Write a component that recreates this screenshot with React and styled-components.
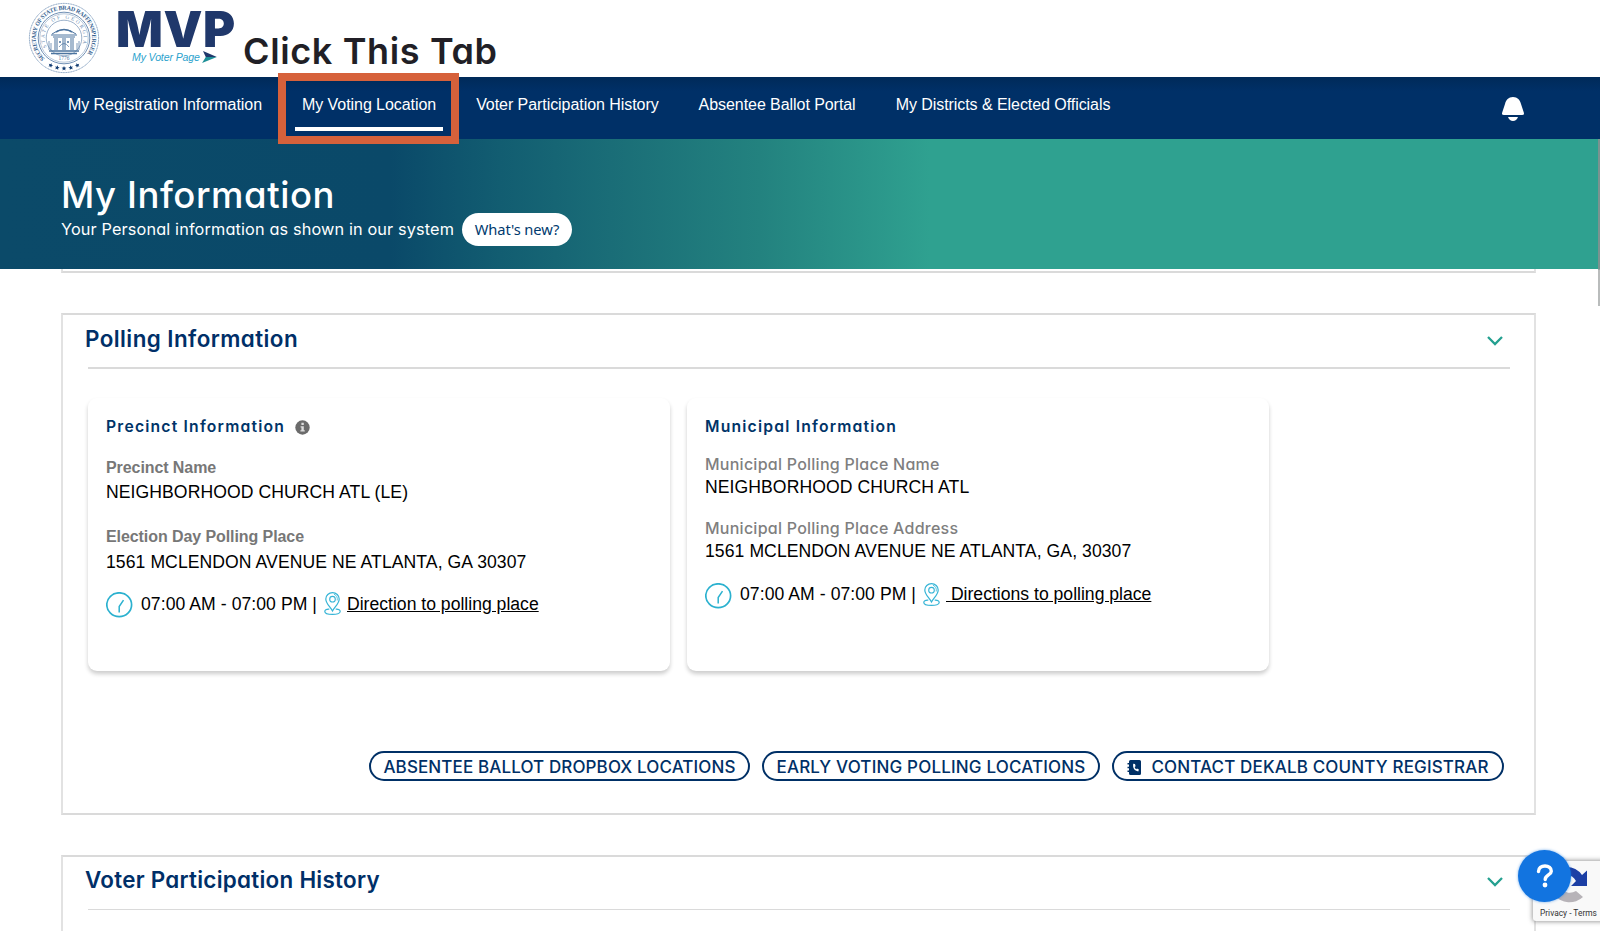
import React from "react";
import styled, { createGlobalStyle, css } from "styled-components";

const plain = `"Liberation Sans", Arial, sans-serif`;
const navy = "#003066";
const line = "#dadada";

/* Inter with the single-storey "a" */
const geometric = (font) => css`
  font: ${font} Inter, "Open Sans", sans-serif;
  font-feature-settings: "cv11";
`;

const GlobalStyle = createGlobalStyle`
  * { box-sizing: border-box; }
  html, body { margin: 0; height: 931px; overflow: hidden; background: #fff; }
  body { font-family: ${plain}; color: #000; }
  #root { height: 931px; overflow: hidden; }
`;

const Page = styled.div`
  position: relative;
  width: 1600px;
  height: 931px;
  overflow: hidden;
  background: #fff;
  white-space: nowrap;
`;

/* ---------- header ---------- */
const Header = styled.header`
  display: flex;
  align-items: flex-start;
  height: 77px;
  padding-left: 28px;
`;
const SealIcon = styled.svg`
  width: 72px;
  height: 72px;
  margin-top: 2px;
  flex: none;
`;
const Brand = styled.div`
  display: flex;
  flex-direction: column;
  width: 127px;
  padding: 12px 0 0 16px;
`;
const BrandName = styled.div`
  ${geometric("900 49px/36px")}
  letter-spacing: 0.6px;
  color: #20386b;
`;
const BrandTag = styled.div`
  display: flex;
  gap: 1px;
  align-items: flex-start;
  margin-top: 3px;
  padding-left: 16px;
  font: italic 10.5px/12px ${plain};
  letter-spacing: -0.1px;
  color: #2ba2cd;
`;
const TagArrow = styled.svg`
  width: 16px;
  height: 12px;
  flex: none;
`;
const Caption = styled.div`
  margin-top: 31px;
  padding-left: 16px;
  ${geometric("600 36px/40px")}
  letter-spacing: 0.63px;
  color: #211f26;
`;

/* ---------- navigation ---------- */
const Nav = styled.nav`
  display: flex;
  align-items: flex-start;
  gap: 26px;
  height: 62px;
  padding-left: 61px;
  background: linear-gradient(#002a59 0, #003067 14px);
`;
const NavItem = styled.a`
  position: relative;
  height: 54px;
  padding: 18px 7px 0;
  font: 16px/20px ${plain};
  letter-spacing: -0.06px;
  color: #fff;
  border-bottom: 4px solid ${(p) => (p.$active ? "#fff" : "transparent")};
`;
const Highlight = styled.span`
  position: absolute;
  z-index: 2;
  left: -17px;
  right: -16px;
  top: -4px;
  height: 71px;
  border: 8px solid #d6613b;
`;
const BellButton = styled.svg`
  width: 24px;
  height: 25px;
  margin: 19px 75px 0 auto;
  fill: #fff;
`;

/* ---------- banner ---------- */
const Banner = styled.section`
  height: 130px;
  padding: 38px 0 0 61px;
  color: #fff;
  background: linear-gradient(90deg, #0b4a69 0, #0a4969 390px, #125d71 500px, #1a6d77 610px, #23827f 760px, #2fa190 930px);
`;
const Title = styled.h1`
  margin: 0;
  ${geometric("500 36.5px/36px")}
  letter-spacing: 0.55px;
`;
const SubtitleRow = styled.div`
  display: flex;
  align-items: center;
  height: 33px;
`;
const Subtitle = styled.span`
  width: 401px;
  margin-top: -2px;
  ${geometric("400 16.3px/24px")}
  letter-spacing: 0.13px;
`;
const Pill = styled.button`
  width: 110px;
  height: 33px;
  padding: 0 0 2px;
  border: 0;
  border-radius: 17px;
  background: #fff;
  color: #003a6e;
  font: 14.7px/30px "Noto Sans", sans-serif;
  letter-spacing: -0.1px;
`;

/* ---------- cards ---------- */
const Main = styled.main`
  display: flex;
  flex-direction: column;
  gap: 40px;
  width: 1475px;
  margin-left: 61px;
`;
const Card = styled.section`
  height: ${(p) => p.$height}px;
  flex: none;
  border: 2px solid ${line};
  border-top-width: ${(p) => (p.$cut ? 0 : 2)}px;
  border-left-color: #e2e2e2;
  border-right-color: #e2e2e2;
`;
const CardHead = styled.div`
  display: flex;
  justify-content: space-between;
  height: ${(p) => p.$height}px;
  margin: 0 24px 0 25px;
  padding-top: ${(p) => p.$height - 46}px;
  border-bottom: ${(p) => p.$height - 52}px solid ${line};
`;
const CardTitle = styled.h2`
  margin: 0 0 0 -3px;
  ${geometric("600 22.4px/32px")}
  letter-spacing: ${(p) => p.$tracking}px;
  color: #002f68;
`;
const Chevron = styled.svg`
  width: 16px;
  height: 10px;
  margin: 13px 7px 0 0;
  fill: none;
  stroke: #24a090;
  stroke-width: 2.3;
`;
const Panels = styled.div`
  display: flex;
  gap: 17px;
  margin: 29px 0 0 25px;
`;
const Panel = styled.article`
  width: 582px;
  height: 273px;
  padding: 18px;
  border-radius: 9px;
  box-shadow: 0 3px 4px rgba(0, 0, 0, 0.2);
`;
const PanelTitle = styled.h3`
  display: flex;
  gap: 10px;
  margin: 0;
  ${geometric("600 15.7px/21px")}
  letter-spacing: 1.2px;
  color: #003468;
`;
const InfoIcon = styled.svg`
  width: 15px;
  height: 15px;
  margin-top: 4px;
`;
const Label = styled.div`
  margin-top: ${(p) => p.$gap}px;
  ${(p) => (p.$round ? geometric("500 16px/20px") : `font: bold 16px/20px ${plain};`)}
  letter-spacing: ${(p) => (p.$round ? 0.25 : -0.08)}px;
  color: ${(p) => (p.$round ? "#7f7f7f" : "#777")};
`;
const Value = styled.div`
  margin-top: ${(p) => p.$gap}px;
  font: 17.6px/22px ${plain};
  letter-spacing: 0.07px;
`;
const Hours = styled.div`
  display: flex;
  align-items: flex-start;
  margin-top: ${(p) => p.$gap}px;
  font: 17.6px/22px ${plain};
`;
const ClockIcon = styled.svg`
  width: 27px;
  height: 26px;
  margin: 0 8px 0 0;
  fill: none;
  stroke: #2bb1cf;
`;
const Time = styled.span`
  width: 183px;
  padding-top: ${(p) => p.$drop}px;
  letter-spacing: 0.06px;
`;
const PinIcon = styled.svg`
  width: 17px;
  height: 23px;
  fill: none;
  stroke: #35b4d6;
`;
const Directions = styled.a`
  margin: ${(p) => p.$drop}px 0 0 ${(p) => p.$gap}px;
  color: #000;
  text-decoration: underline;
  white-space: pre;
`;
const Actions = styled.div`
  display: flex;
  justify-content: flex-end;
  gap: 12px;
  margin: 80px 30px 0 0;
`;
const Action = styled.button`
  display: flex;
  align-items: center;
  justify-content: center;
  gap: 9px;
  width: ${(p) => p.$width}px;
  height: 30px;
  padding: 2px 0 0;
  border: 2px solid ${navy};
  border-radius: 15px;
  background: #fff;
  color: ${navy};
  ${geometric("500 17px/24px")}
  letter-spacing: ${(p) => p.$tracking}px;
`;
const BookIcon = styled.svg`
  width: 15px;
  height: 15px;
`;

/* ---------- floating pieces ---------- */
const ScrollThumb = styled.div`
  position: absolute;
  right: 0;
  top: 139px;
  width: 2px;
  height: 167px;
  background: linear-gradient(#7b9390 0, #7b9390 130px, #b9bcbc 131px);
`;
const Captcha = styled.div`
  position: absolute;
  left: 1533px;
  top: 861px;
  width: 76px;
  height: 60px;
  border-radius: 3px;
  background: #f9f9f9;
  box-shadow: 0 0 4px 1px rgba(100, 100, 100, 0.6);
`;
const CaptchaLogo = styled.svg`
  display: block;
  width: 40px;
  height: 46px;
  margin-left: 17px;
`;
const CaptchaText = styled.div`
  margin-left: 7px;
  font: 8.4px/12px Roboto, sans-serif;
  color: #333;
`;
const Help = styled.button`
  position: absolute;
  left: 1518px;
  top: 850px;
  width: 53px;
  height: 52px;
  padding: 0;
  border: 0;
  border-radius: 50%;
  background: #1274e0;
  box-shadow: 0 0 3px rgba(18, 116, 224, 0.6);
`;
const HelpMark = styled.svg`
  display: block;
  margin: 0 auto;
  width: 18px;
  height: 24px;
`;

const Seal = () => (
  <SealIcon viewBox="-36 -36 72 72">
    <g fill="none" stroke="#7291b5">
      <circle r="34.6" strokeWidth="0.9" strokeDasharray="1.2 0.5" />
      <circle r="25.8" strokeWidth="1" />
      <circle r="24.2" strokeWidth="0.5" />
      <circle r="17.8" strokeWidth="0.7" />
    </g>
    <defs>
      <path id="outer-ring" d="M-19.2 20.6A28.2 28.2 0 1 1 19.2 20.6" />
      <path id="inner-ring" d="M-17.2 9.2A19.5 19.5 0 1 1 17.2 9.2" />
    </defs>
    <text fill="#35618f" fontFamily="Liberation Serif" fontWeight="bold" fontSize="6" textLength="128">
      <textPath href="#outer-ring" textLength="128">SECRETARY OF STATE BRAD RAFFENSPERGER</textPath>
    </text>
    <text fill="#6b8cb1" fontFamily="Liberation Serif" fontSize="5.2" textLength="76">
      <textPath href="#inner-ring" textLength="76">STATE OF GEORGIA</textPath>
    </text>
    <g stroke="#4c749f" fill="none" strokeWidth="1">
      <path d="M-12 -4Q0 -13 12 -4M-13 -3H13M-11 -1H11" />
      <path d="M-8 -6Q0 -11 8 -6" strokeWidth="1.6" />
      <path d="M-9 0V12M-7 0V12M-1 0V12M1 0V12M7 0V12M9 0V12" />
      <path d="M-15 13H15M-13 15.5H13M-5 4H-3M3 4H5" strokeWidth="1.3" />
      <path d="M-15 3V12M-13 5V12M13 5V12M15 3V12M-5 9Q0 2 5 9" opacity="0.7" />
    </g>
    <text y="22" fill="#4c749f" fontFamily="Liberation Serif" fontSize="5.4" textAnchor="middle">1776</text>
    <g fill="#123c72">
      {[-26, -13, 0, 13, 26].map((a) => (
        <path
          key={a}
          transform={`rotate(${a}) translate(0 30.4)`}
          d="M0-2.4L.7-.8 2.4-.7 1.1.4 1.5 2 0 1.1-1.5 2-1.1.4-2.4-.7-.7-.8z"
        />
      ))}
    </g>
  </SealIcon>
);

const Clock = () => (
  <ClockIcon viewBox="0 0 27 26">
    <ellipse cx="13.2" cy="12.7" rx="12.4" ry="11.9" strokeWidth="1.7" />
    <path d="M13.2 20.5V14.5L17.5 8.2" strokeWidth="1.5" />
  </ClockIcon>
);

const Pin = () => (
  <PinIcon viewBox="0 0 17 23">
    <path d="M8.5 19C6 14.5 1.8 11.5 1.8 7A6.7 6.4 0 0 1 15.2 7C15.2 11.5 11 14.5 8.5 19Z" strokeWidth="1.2" />
    <path d="M10 2.2Q14 4 13.2 8.5" strokeWidth="0.8" />
    <circle cx="8.5" cy="7.2" r="2.8" strokeWidth="1.1" />
    <path d="M5.3 17.2C2 17 .8 18 .8 19.4 .8 21.3 4.3 22.3 8.5 22.3S16.2 21.3 16.2 19.4C16.2 18 15 17 11.7 17.2" strokeWidth="1.2" />
  </PinIcon>
);

const SectionHead = ({ title, tracking, height = 54 }) => (
  <CardHead $height={height}>
    <CardTitle $tracking={tracking}>{title}</CardTitle>
    <Chevron viewBox="0 0 16 10"><path d="M1 1L8 8 15 1" /></Chevron>
  </CardHead>
);

const navItems = [
  "My Registration Information",
  "My Voting Location",
  "Voter Participation History",
  "Absentee Ballot Portal",
  "My Districts & Elected Officials",
];

export default function App() {
  return (
    <Page>
      <GlobalStyle />
      <Header>
        <Seal />
        <Brand>
          <BrandName>MVP</BrandName>
          <BrandTag>
            My Voter Page
            <TagArrow viewBox="0 0 17 13">
              <path d="M2 0L17 6.5H5z" fill="#20386b" />
              <path d="M17 6.5L1 13 5 6.5z" fill="#1d8f97" />
            </TagArrow>
          </BrandTag>
        </Brand>
        <Caption>Click This Tab</Caption>
      </Header>
      <Nav>
        {navItems.map((item, i) => (
          <NavItem key={item} $active={i === 1}>
            {item}
            {i === 1 && <Highlight />}
          </NavItem>
        ))}
        <BellButton viewBox="0 0 24 25">
          <path d="M12 1C16.5 1 19 4 20 8L22.8 16.5Q23.6 19 21.2 19H2.8Q.4 19 1.2 16.5L4 8C5 4 7.5 1 12 1ZM7 21H17Q15.5 25 12 25T7 21Z" />
        </BellButton>
      </Nav>
      <Banner>
        <Title>My Information</Title>
        <SubtitleRow>
          <Subtitle>Your Personal information as shown in our system</Subtitle>
          <Pill>What's new?</Pill>
        </SubtitleRow>
      </Banner>
      <Main>
        <Card $height={4} $cut />
        <Card $height={502}>
          <SectionHead title="Polling Information" tracking={0.43} />
          <Panels>
            <Panel>
              <PanelTitle>
                Precinct Information
                <InfoIcon viewBox="0 0 15 15">
                  <circle cx="7.5" cy="7.5" r="7.2" fill="#6b6b6b" />
                  <path d="M6.4 2.8H8.8V5H6.4zM5.6 6.2H8.8V10.2H9.8V11.6H5.4V10.2H6.4V7.5H5.6z" fill="#ddd" />
                </InfoIcon>
              </PanelTitle>
              <Label $gap={21}>Precinct Name</Label>
              <Value $gap={3}>NEIGHBORHOOD CHURCH ATL (LE)</Value>
              <Label $gap={24}>Election Day Polling Place</Label>
              <Value $gap={4}>1561 MCLENDON AVENUE NE ATLANTA, GA 30307</Value>
              <Hours $gap={19}>
                <Clock />
                <Time $drop={1}>07:00 AM - 07:00 PM |</Time>
                <Pin />
                <Directions $drop={1} $gap={6}>Direction to polling place</Directions>
              </Hours>
            </Panel>
            <Panel>
              <PanelTitle>Municipal Information</PanelTitle>
              <Label $round $gap={17}>Municipal Polling Place Name</Label>
              <Value $gap={2}>NEIGHBORHOOD CHURCH ATL</Value>
              <Label $round $gap={20}>Municipal Polling Place Address</Label>
              <Value $gap={2}>1561 MCLENDON AVENUE NE ATLANTA, GA, 30307</Value>
              <Hours $gap={21}>
                <Clock />
                <Time $drop={0}>07:00 AM - 07:00 PM |</Time>
                <Pin />
                <Directions $drop={0} $gap={6}>{" Directions to polling place"}</Directions>
              </Hours>
            </Panel>
          </Panels>
          <Actions>
            <Action $width={381} $tracking={0.12}>ABSENTEE BALLOT DROPBOX LOCATIONS</Action>
            <Action $width={338} $tracking={0.18}>EARLY VOTING POLLING LOCATIONS</Action>
            <Action $width={392} $tracking={0.15}>
              <BookIcon viewBox="0 0 15 15">
                <path d="M3.5 0H12.5Q14 0 14 1.5V13.5Q14 15 12.5 15H3.5Q2 15 2 13.5V12H.5V10.5H2V8.2H.5V6.7H2V4.4H.5V2.9H2V1.5Q2 0 3.5 0Z" fill={navy} />
                <path d="M6.2 3.8C5.6 8 7.5 11 11.3 11.4L11.9 9.5 10 8.5 9.2 9.2Q7.9 8.4 7.6 7L8.6 6.3 8 4.1Z" fill="#fff" />
              </BookIcon>
              CONTACT DEKALB COUNTY REGISTRAR
            </Action>
          </Actions>
        </Card>
        <Card $height={200}>
          <SectionHead title="Voter Participation History" tracking={0.27} height={53} />
        </Card>
      </Main>
      <ScrollThumb />
      <Captcha>
        <CaptchaLogo viewBox="0 0 40 46">
          <path d="M16 6A19 19 0 0 1 32 14L37 9.5V25H21L26 20A11 11 0 0 0 16 14Z" fill="#1c3fa5" />
          <path d="M4 34L11 28A12 12 0 0 0 26 30L33 36A20 20 0 0 1 4 34Z" fill="#b7b3b8" />
        </CaptchaLogo>
        <CaptchaText>Privacy - Terms</CaptchaText>
      </Captcha>
      <Help aria-label="Help">
        <HelpMark viewBox="0 0 18 24">
          <path d="M2.5 7.5C2.5 4 5.3 2 9 2S15.3 4 15.3 7.2C15.3 11 9.2 11 9.2 15.5" fill="none" stroke="#fff" strokeWidth="3.4" strokeLinecap="round" />
          <circle cx="9" cy="21" r="2.4" fill="#fff" />
        </HelpMark>
      </Help>
    </Page>
  );
}
